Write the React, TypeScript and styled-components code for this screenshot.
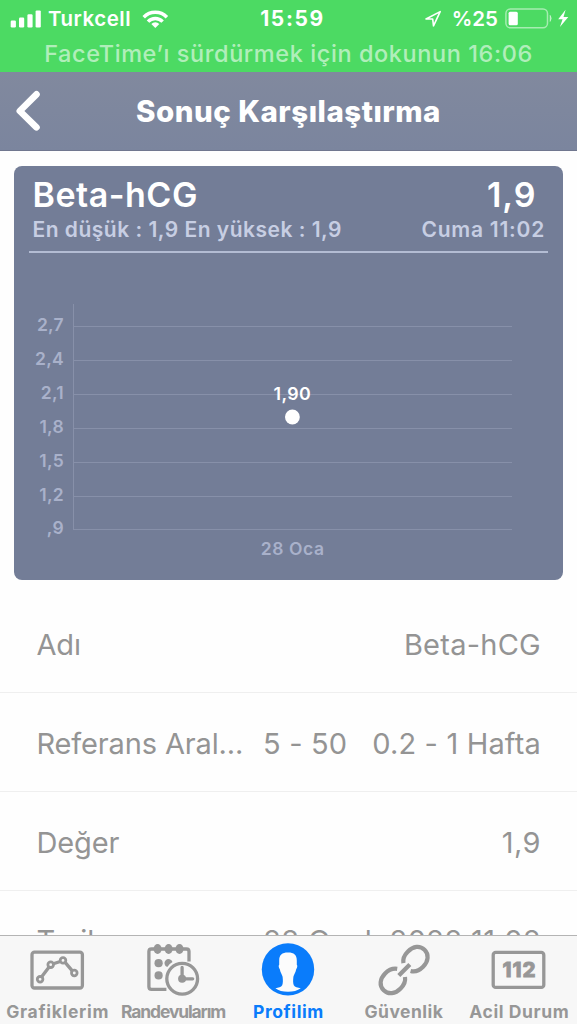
import type { ReactNode } from 'react';
import styled, { createGlobalStyle } from 'styled-components';

const GlobalStyle = createGlobalStyle`
	* {
		box-sizing: border-box;
	}
	body {
		margin: 0;
		background: #fefefe;
		font-family: Inter, 'Noto Sans', sans-serif;
	}
	svg {
		display: block;
		flex: none;
	}
`;

const AppWrapper = styled.div`
	display: flex;
	flex-direction: column;
	width: 577px;
	height: 1024px;
	overflow: hidden;
	background: #fefefe;
`;

const StatusBar = styled.header`
	flex: none;
	height: 72px;
	background: #4cda63;
	color: #fff;
`;

const StatusRow = styled.div`
	display: grid;
	grid-template-columns: 1fr auto 1fr;
	align-items: center;
	height: 37px;
	padding: 0 8px 0 10px;
`;

const StatusGroup = styled.div<{ $end?: boolean }>`
	display: flex;
	align-items: center;
	justify-content: ${(p) => (p.$end ? 'flex-end' : 'flex-start')};
`;

const Label = styled.span<{ $size: number; $weight?: number; $spacing?: number }>`
	font-size: ${(p) => p.$size}px;
	font-weight: ${(p) => p.$weight ?? 500};
	letter-spacing: ${(p) => p.$spacing ?? 0}px;
	white-space: pre;
`;

const Carrier = styled(Label)`
	margin: 0 11px 0 7px;
`;

const Clock = styled(Label)`
	margin-left: 6px;
`;

const BatteryLevel = styled(Label)`
	margin: 0 7px 0 11px;
`;

const CallHint = styled.div`
	line-height: 33px;
	text-align: center;
	color: rgba(255, 255, 255, 0.58);
`;

const NavBar = styled.nav`
	flex: none;
	display: grid;
	grid-template-columns: 60px 1fr 60px;
	align-items: center;
	height: 79px;
	background: linear-gradient(#81899e, #7b859e);
	border-bottom: 1px solid #70778f;
	color: #fff;
	text-align: center;
`;

const Content = styled.main`
	flex: 1;
	min-height: 0;
	overflow: hidden;
	padding-top: 15px;
`;

const Card = styled.section`
	width: 548.5px;
	height: 414px;
	margin: 0 0 14px 14px;
	padding-top: 9px;
	border-radius: 8px;
	background: #737d97;
`;

const CardLine = styled.div<{ $height: number; $right: number }>`
	display: flex;
	justify-content: space-between;
	line-height: ${(p) => p.$height}px;
	height: ${(p) => p.$height}px;
	padding: 0 ${(p) => p.$right}px 0 18.5px;
`;

const CardTitle = styled(Label)`
	color: #fff;
`;

const CardSub = styled(Label)`
	color: #c7cee3;
`;

const Divider = styled.div`
	height: 2px;
	margin: 6px 14.5px 0 15px;
	background: #b3bcd3;
`;

const Row = styled.div`
	display: flex;
	align-items: center;
	justify-content: space-between;
	height: 99px;
	padding: 2px 36px 0 36.5px;
	border-bottom: 1px solid #efefef;
	color: #949494;

	&:last-child {
		height: 97px;
	}
`;

const TabBar = styled.footer`
	flex: none;
	display: grid;
	grid-template-columns: repeat(5, 1fr);
	height: 89px;
	border-top: 1px solid #b4b4b4;
	background: #f7f7f7;
`;

const TabItem = styled.div<{ $active?: boolean }>`
	display: flex;
	flex-direction: column;
	align-items: center;
	min-width: 0;
	padding-top: 4px;
	line-height: 24px;
	color: ${(p) => (p.$active ? '#0a7cfb' : '#979797')};
`;

const ticks = ['2,7', '2,4', '2,1', '1,8', '1,5', '1,2', ',9'];
const tickY = [326, 360, 394, 428, 462, 496, 529];

function Chart() {
	return (
		<svg width="548" height="326" viewBox="14 253 548 326">
			<g stroke="#8790a9" strokeWidth="1">
				<path d="M73.5 304V530" />
				{tickY.map((y) => (
					<path key={y} d={`M73 ${y + 0.5}H512`} />
				))}
			</g>
			<g fill="#a9b1ca" fontSize="17.5" fontWeight="600">
				{ticks.map((tick, i) => (
					<text key={tick} x="64" y={tickY[i] + 5.3} textAnchor="end" letterSpacing="0.3">
						{tick}
					</text>
				))}
				<text x="292.7" y="555.3" textAnchor="middle" letterSpacing="0.6">
					28 Oca
				</text>
			</g>
			<text x="292.4" y="400.4" textAnchor="middle" fill="#fff" fontSize="17.8" fontWeight="600" letterSpacing="0.4">
				1,90
			</text>
			<circle cx="292.4" cy="417" r="7.4" fill="#fff" />
		</svg>
	);
}

function SignalIcon() {
	return (
		<svg width="31" height="18" viewBox="10 9 31 18" fill="#fff">
			<rect x="10.7" y="19.5" width="5.2" height="7" rx="1.2" />
			<rect x="19" y="16.5" width="5.2" height="10" rx="1.2" />
			<rect x="27.4" y="13.2" width="5.2" height="13.3" rx="1.2" />
			<rect x="35.6" y="9.4" width="5.2" height="17.1" rx="1.2" />
		</svg>
	);
}

function WifiIcon() {
	return (
		<svg width="27" height="20" viewBox="141 8 27 20" fill="none" stroke="#fff" strokeWidth="3.5">
			<path d="M142.7 16.2a16.3 16.3 0 0 1 23.2 0" />
			<path d="M147 20.6a10.2 10.2 0 0 1 14.6 0" />
			<path d="M154.3 27l-4-4.1a5.8 5.8 0 0 1 8 0z" fill="#fff" stroke="none" />
		</svg>
	);
}

function LocationIcon() {
	return (
		<svg width="18" height="18" viewBox="423 10 18 18" fill="none" stroke="#fff" strokeWidth="1.6" strokeLinejoin="round">
			<path d="M426 19l14.2-7.4-6.7 14.2-.8-6.8z" />
		</svg>
	);
}

function BatteryIcon() {
	return (
		<svg width="64" height="22" viewBox="505 8 64 22" fill="none">
			<rect x="505.9" y="9" width="41.6" height="18.8" rx="4.5" stroke="#fff" strokeOpacity=".5" strokeWidth="1.5" />
			<path d="M550.1 15.3q2.3 3 0 6.2z" fill="#fff" fillOpacity=".5" stroke="#fff" strokeOpacity=".4" />
			<rect x="508.6" y="11.8" width="9.2" height="13.4" rx="1.5" fill="#fff" />
			<path d="M565.6 9.8l-7.4 9.4h4.4l-2.7 7.8 8.4-10h-4.8z" fill="#fff" />
		</svg>
	);
}

function BackIcon() {
	return (
		<svg width="60" height="46" viewBox="0 88 60 46" fill="none" stroke="#fff" strokeWidth="6.6" strokeLinecap="round" strokeLinejoin="round">
			<path d="M36.5 94.3L19.8 111l16.7 16.3" />
		</svg>
	);
}

function GraphIcon() {
	return (
		<svg width="60" height="60" viewBox="27.7 940 60 60" fill="none" stroke="currentColor" strokeWidth="3.3">
			<rect x="31.7" y="952.2" width="50.4" height="35.8" rx="2.5" />
			<path d="M41.2 977l7.6-10M53 963.8l7-2.3M64.8 962.4l7.2 8.5" />
			<g strokeWidth="2.8">
				<circle cx="39.8" cy="979.3" r="2.8" />
				<circle cx="50.4" cy="964.7" r="2.8" />
				<circle cx="62.7" cy="960.4" r="2.8" />
				<circle cx="74" cy="973" r="2.8" />
			</g>
		</svg>
	);
}

function CalendarIcon() {
	return (
		<svg width="60" height="60" viewBox="143.1 940 60 60" fill="none" stroke="currentColor" strokeWidth="3.3">
			<path d="M166.5 989.3h-14.9q-2.6 0-2.6-2.6v-35.1q0-2.6 2.6-2.6h34.9q2.6 0 2.6 2.6v10" />
			<g fill="currentColor" stroke="none">
				<ellipse cx="157.7" cy="949" rx="4" ry="5" />
				<ellipse cx="168.7" cy="949" rx="4" ry="5" />
				<ellipse cx="179.6" cy="949" rx="4" ry="5" />
				<circle cx="158.7" cy="963.2" r="4.1" />
				<path d="M172.6 962.1a4.1 4.1 0 1 0-5.2 5q1.9-3.2 5.2-5z" />
				<circle cx="158.7" cy="975.4" r="4.1" />
				<circle cx="182.2" cy="978.8" r="4" />
			</g>
			<circle cx="182.3" cy="978.8" r="15.4" />
			<path d="M182.2 967.5v11.3h10.6" strokeLinecap="round" />
		</svg>
	);
}

function ProfileIcon() {
	return (
		<svg width="60" height="60" viewBox="257.3 940 60 60">
			<circle cx="287.3" cy="969.4" r="26.2" fill="currentColor" />
			<path
				d="M287.3 952.4c6.1 0 8.8 2.4 8.8 8v4.4c.9.8.5 3.3-.6 4.4-.7 3.8-2.3 5.3-2.8 7.5-.4 3.3-.5 6.4.4 8.6 1.1 1.9 3.7 2.3 7 2.9-3.4 2.4-7.6 3.6-12.8 3.6s-9.6-1.2-12.6-3.6c3.1-.6 5.7-1 6.8-2.9.9-2.2.8-5.3.4-8.6-.5-2.2-2.1-3.7-2.8-7.5-1.1-1.1-1.5-3.6-.6-4.4v-4.4c0-5.6 2.7-8 8.8-8z"
				fill="#fcfcfc"
			/>
		</svg>
	);
}

function LinkIcon() {
	return (
		<svg width="60" height="60" viewBox="374 940 60 60" fill="none" stroke="currentColor" strokeWidth="4.2">
			<path d="M403.4 963.2c-.7-4.3 1-8.1 4.3-11.4 5.6-5.9 12.2-6.4 16.8-2s4.1 11.4-1.4 16.9c-3.9 3.9-7.8 5.5-12.5 4.2" />
			<path d="M397.2 968.8c-4.5-.7-8.4.9-12.1 4.7-5.3 5.4-6.1 12.1-1.4 16.7s11.6 3.8 16.9-1.7c3.7-3.8 5.1-7.5 4.4-11.5" />
			<path d="M398.8 975.4l11-11" />
		</svg>
	);
}

function EmergencyIcon() {
	return (
		<svg width="60" height="60" viewBox="488.8 940 60 60">
			<rect x="493" y="952.4" width="50.6" height="35" rx="2.5" fill="none" stroke="currentColor" strokeWidth="3.3" />
			<text x="519.3" y="977.3" textAnchor="middle" fontSize="20.5" fontWeight="800" letterSpacing="1" fill="currentColor" stroke="currentColor" strokeWidth=".8">
				112
			</text>
		</svg>
	);
}

const rows = [
	{ name: 'Adı', value: 'Beta-hCG', spacing: 0.25 },
	{ name: 'Referans Aral...', value: '5 - 50   0.2 - 1 Hafta', spacing: 0.16 },
	{ name: 'Değer', value: '1,9', spacing: 0.4 },
	{ name: 'Tarih', value: '28 Ocak 2022 11:02', spacing: 0.4 }
];

const tabs: { label: string; icon: ReactNode; spacing: number; active?: boolean }[] = [
	{ label: 'Grafiklerim', icon: <GraphIcon />, spacing: 0.7 },
	{ label: 'Randevularım', icon: <CalendarIcon />, spacing: -1.15 },
	{ label: 'Profilim', icon: <ProfileIcon />, spacing: 0.6, active: true },
	{ label: 'Güvenlik', icon: <LinkIcon />, spacing: 0.45 },
	{ label: 'Acil Durum', icon: <EmergencyIcon />, spacing: 0.6 }
];

function App() {
	return (
		<AppWrapper>
			<GlobalStyle />
			<StatusBar>
				<StatusRow>
					<StatusGroup>
						<SignalIcon />
						<Carrier $size={20.5} $weight={600} $spacing={0.5}>
							Turkcell
						</Carrier>
						<WifiIcon />
					</StatusGroup>
					<Clock $size={21} $weight={700} $spacing={1.6}>
						15:59
					</Clock>
					<StatusGroup $end>
						<LocationIcon />
						<BatteryLevel $size={20.5} $weight={600} $spacing={0}>
							%25
						</BatteryLevel>
						<BatteryIcon />
					</StatusGroup>
				</StatusRow>
				<CallHint>
					<Label $size={23.5} $spacing={0.58}>
						FaceTime’ı sürdürmek için dokunun 16:06
					</Label>
				</CallHint>
			</StatusBar>
			<NavBar>
				<BackIcon />
				<Label $size={29.5} $weight={800} $spacing={0.5}>
					Sonuç Karşılaştırma
				</Label>
			</NavBar>
			<Content>
				<Card>
					<CardLine $height={40} $right={26}>
						<CardTitle $size={34} $weight={600} $spacing={0.5}>
							Beta-hCG
						</CardTitle>
						<CardTitle $size={34} $weight={600} $spacing={1}>
							1,9
						</CardTitle>
					</CardLine>
					<CardLine $height={30} $right={17.5}>
						<CardSub $size={21} $weight={600} $spacing={0.5}>
							En düşük : 1,9 En yüksek : 1,9
						</CardSub>
						<CardSub $size={21} $weight={600} $spacing={0.75}>
							Cuma 11:02
						</CardSub>
					</CardLine>
					<Divider />
					<Chart />
				</Card>
				{rows.map((row) => (
					<Row key={row.name}>
						<Label $size={29} $weight={400} $spacing={-0.15}>
							{row.name}
						</Label>
						<Label $size={29} $weight={400} $spacing={row.spacing}>
							{row.value}
						</Label>
					</Row>
				))}
			</Content>
			<TabBar>
				{tabs.map((tab) => (
					<TabItem key={tab.label} $active={tab.active}>
						{tab.icon}
						<Label $size={17.5} $weight={700} $spacing={tab.spacing}>
							{tab.label}
						</Label>
					</TabItem>
				))}
			</TabBar>
		</AppWrapper>
	);
}

export default App;
